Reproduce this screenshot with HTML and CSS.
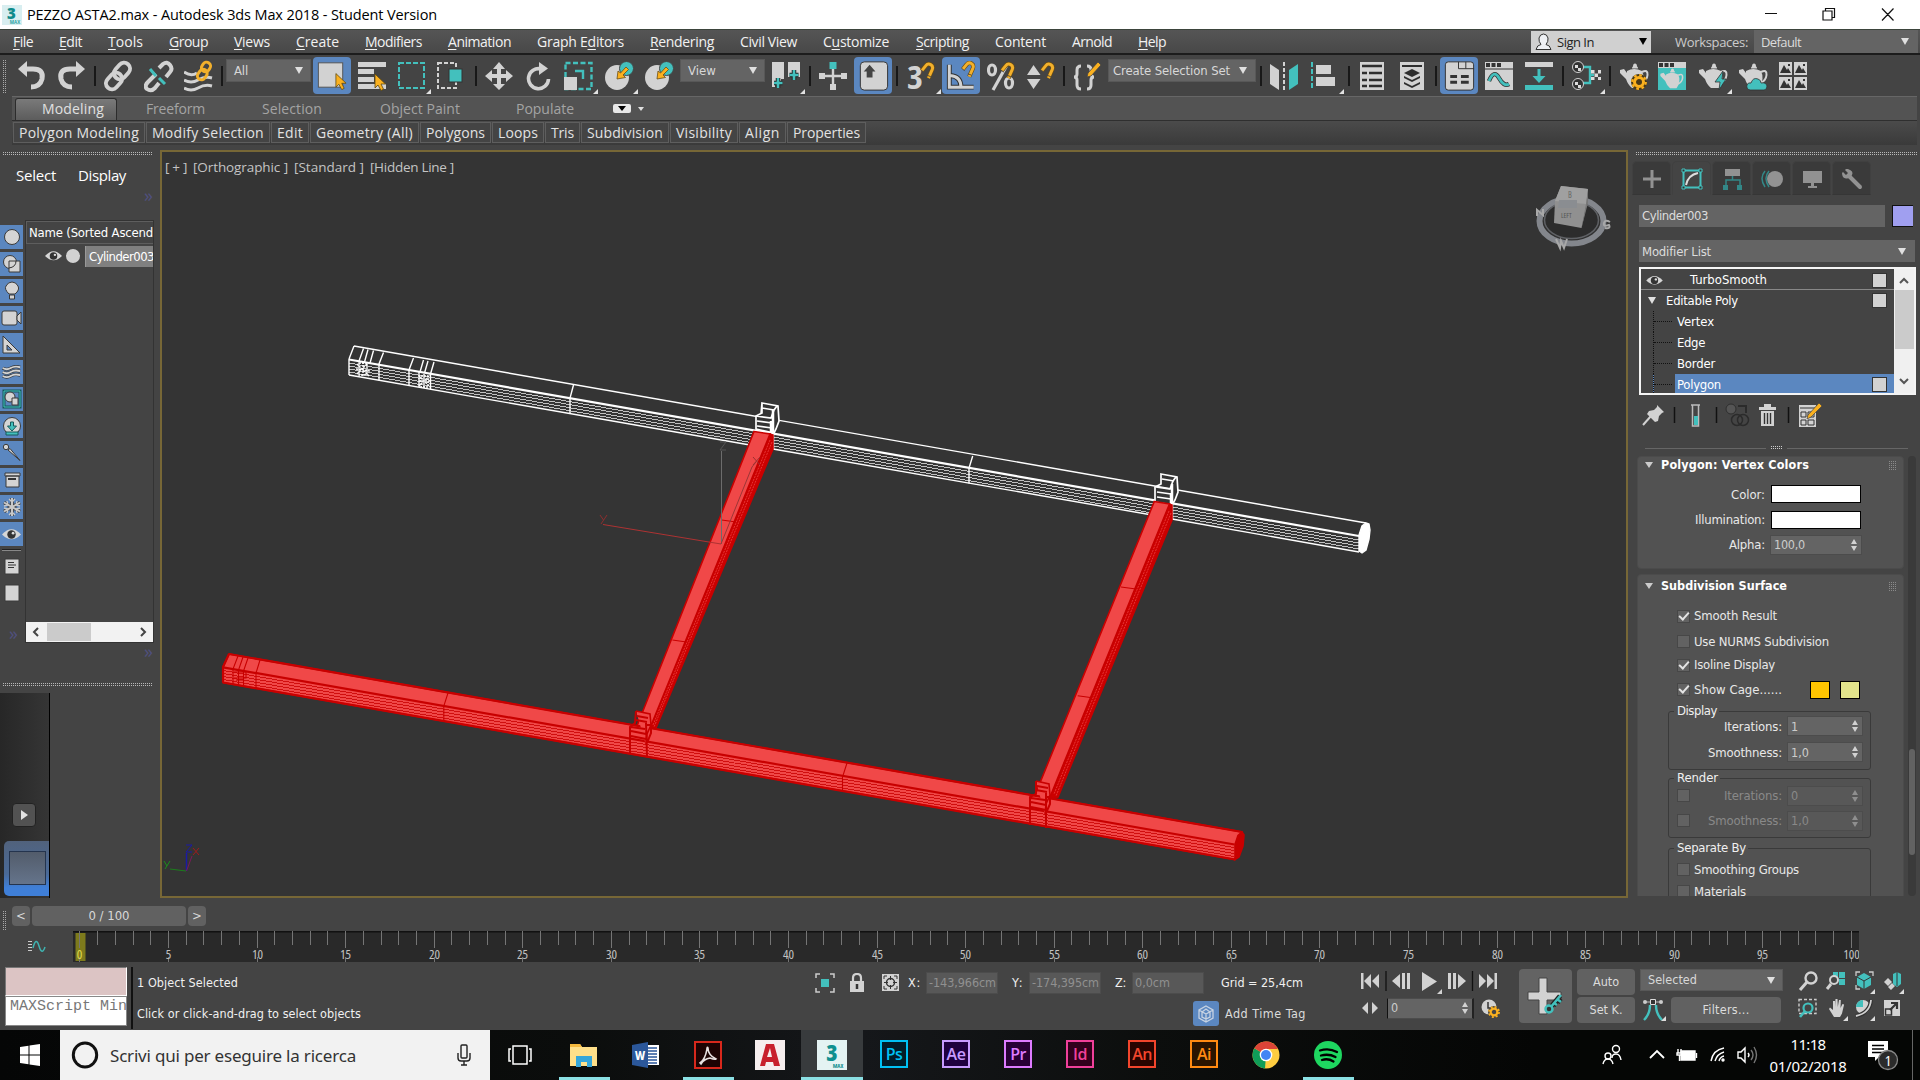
FILE: index.html
```html
<!DOCTYPE html>
<html lang="en">
<head>
<meta charset="utf-8">
<title>PEZZO ASTA2.max - Autodesk 3ds Max 2018 - Student Version</title>
<link rel="stylesheet" href="styles.css">
</head>
<body>
<svg class="defs" width="0" height="0">
  <defs>
    <symbol id="magnet" viewBox="0 0 16 20"><path d="M2 9 6 4C9 0 15 3 13 8L9 17" fill="none" stroke="#6b4c10" stroke-width="4.6"/><path d="M2 9 6 4C9 0 15 3 13 8L9 17" fill="none" stroke="#f2b02c" stroke-width="3.2"/><path d="M1 8l3 3M7.500 14l4 1.500" stroke="#444" stroke-width="1"/></symbol>
    <symbol id="cursor" viewBox="0 0 12 18"><path d="M1 1v14l3-3 3 5.500 2.500-1.300L7 11h4.500z" fill="#fbb11f" stroke="#5d480f" stroke-width=".8"/></symbol>
    <symbol id="teapot" viewBox="0 0 30 26"><path d="M7 8Q14 4 22 8Q26 16 20 25H12Q8 22 6 16L0 10V7L4 6 7 10z" fill="#d2d2d2"/><path d="M12 5.500q0-2 1-2 0-3 2-3t2 3q1 0 1 2z" fill="#d2d2d2"/><path d="M22 9q6-3 5.500 3T21 20" fill="none" stroke="#d2d2d2" stroke-width="2"/></symbol>
    <symbol id="eye" viewBox="0 0 18 12"><path d="M0 6Q9-4 18 6Q9 15 0 6z" fill="#d6d6d6"/><circle cx="9" cy="6" r="4" fill="#333"/><circle cx="10.500" cy="4.800" r="1.300" fill="#ddd"/></symbol>
    <symbol id="corner" viewBox="0 0 5 5"><path d="M5 0v5H0z" fill="#e2e2e2"/></symbol>
    <symbol id="waves" viewBox="0 0 24 18"><path d="M1 4q5 3 10 0t12-1M1 9q5 3 10 0t12-1M1 14q5 3 10 0t12-1" fill="none" stroke="#333" stroke-width="4"/><path d="M1 4q5 3 10 0t12-1M1 9q5 3 10 0t12-1M1 14q5 3 10 0t12-1" fill="none" stroke="#d2d2d2" stroke-width="2.400"/></symbol>
    <symbol id="gear" viewBox="0 0 16 16"><circle cx="8" cy="8" r="4.500" fill="none" stroke="#fbb11f" stroke-width="3"/><circle cx="8" cy="8" r="6.800" fill="none" stroke="#fbb11f" stroke-width="2.200" stroke-dasharray="2.700 2.640"/></symbol>
  </defs>
</svg>

<header class="titlebar">
  <svg class="app-logo" viewBox="0 0 20 20"><rect width="20" height="20" fill="#d8eef0"/><text x="9.500" y="13.500" text-anchor="middle" font-size="15" font-weight="800" fill="#0e8b8b">3</text><text x="13" y="19" text-anchor="middle" font-size="4.500" font-weight="700" fill="#2aa3a3">MAX</text></svg>
  <span class="title" data-w="410">PEZZO ASTA2.max - Autodesk 3ds Max 2018 - Student Version</span>
  <svg class="win-btns" width="160" height="29" viewBox="0 0 160 29" fill="none" stroke="#111" stroke-width="1.200"><path d="M5 13.500h12M63 11h9v9h-9zM65.500 10.500V8.500h9v9h-2M122 8.500l11.500 12M133.500 8.500l-11.500 12"/></svg>
</header>

<nav class="menubar">
  <span data-w="20"><u>F</u>ile</span><span data-w="23"><u>E</u>dit</span><span data-w="35"><u>T</u>ools</span><span data-w="39"><u>G</u>roup</span><span data-w="36"><u>V</u>iews</span><span data-w="43"><u>C</u>reate</span><span data-w="57"><u>M</u>odifiers</span><span data-w="63"><u>A</u>nimation</span><span data-w="87">Graph E<u>d</u>itors</span><span data-w="64"><u>R</u>endering</span><span data-w="57">Civil View</span><span data-w="66">C<u>u</u>stomize</span><span data-w="53"><u>S</u>cripting</span><span data-w="51">Content</span><span data-w="40">Arnold</span><span data-w="28"><u>H</u>elp</span>
  <div class="signin"><svg width="17" height="18" viewBox="0 0 17 18"><path d="M1 16.500q1-4.500 5-5-2.500-3-2-6.500 1-4 4.500-4T13 5q.5 3.500-2 6.500 4 .5 5 5z" fill="#eef0f4" stroke="#333" stroke-width="1"/></svg><span data-w="37">Sign In</span><i class="caret dark"></i></div>
  <span class="ws-label" data-w="73">Workspaces:</span>
  <div class="ws-select"><span data-w="40">Default</span><i class="caret"></i></div>
</nav>

<div class="toolbar">
  <i class="vgrip"></i>
  <svg class="ic" viewBox="0 0 34 38"><path d="M4 12H15Q26 12 24 22Q22 30 13 30" fill="none" stroke="#d2d2d2" stroke-width="5"/><path d="M0 12 9 4v16z" fill="#d2d2d2"/></svg>
  <svg class="ic" viewBox="0 0 34 38"><path d="M24 12H13Q2 12 4 22Q6 30 15 30" fill="none" stroke="#d2d2d2" stroke-width="5"/><path d="M28 12 19 4v16z" fill="#d2d2d2"/></svg>
  <i class="sep"></i>
  <svg class="ic" viewBox="0 0 34 38"><g fill="none" stroke="#d2d2d2" stroke-width="4"><rect x="12" y="5" width="12" height="18" rx="6" transform="rotate(42 18 14)"/><rect x="4" y="15" width="12" height="18" rx="6" transform="rotate(42 10 24)"/></g></svg>
  <svg class="ic" viewBox="0 0 34 38"><g fill="none" stroke="#d2d2d2" stroke-width="4"><path d="M15 11l4-4q4-3 7 1t0 7l-4 5M12 17l-8 8q-4 4-1 7 4 3 8-1l4-5"/></g><path d="M6 12l6 7M15 21l6 6" stroke="#43c0bd" stroke-width="3"/></svg>
  <svg class="ic" viewBox="0 0 34 38"><g fill="none" stroke="#d2d2d2" stroke-width="3"><path d="M0 15q7 5 13 1M0 23q7 4 14 0t14-2M0 31q7 4 14 0t14-2"/></g><g fill="none" stroke="#f2b02c" stroke-width="3"><rect x="18" y="5" width="8" height="10" rx="4" transform="rotate(35 22 10)"/><rect x="14" y="12" width="8" height="11" rx="4" transform="rotate(35 18 18)"/></g></svg>
  <i class="sep"></i>
  <div class="dd"><span data-w="14">All</span><i class="caret"></i></div>
  <svg class="ic on" viewBox="0 0 38 38"><rect x="5" y="6" width="25" height="25" fill="#d2d2d2" stroke="#555"/><use href="#cursor" x="22" y="16" width="12" height="18"/></svg>
  <svg class="ic" viewBox="0 0 34 38"><path d="M0 5h28v5H0zM0 12h16v5H0zM0 20h16v5H0zM0 27h28v5H0z" fill="#d2d2d2"/><use href="#cursor" x="16" y="16" width="12" height="18"/></svg>
  <svg class="ic" viewBox="0 0 34 38"><rect x="1" y="6" width="25" height="25" fill="none" stroke="#43c0bd" stroke-width="2" stroke-dasharray="5 2"/><use href="#corner" x="28" y="32" width="5" height="5"/></svg>
  <svg class="ic" viewBox="0 0 34 38"><rect x="1" y="6" width="18" height="25" fill="none" stroke="#d2d2d2" stroke-width="2" stroke-dasharray="4 2"/><rect x="12" y="12" width="13" height="13" fill="#43c0bd" stroke="#333"/></svg>
  <i class="sep"></i>
  <svg class="ic" viewBox="0 0 34 38"><path d="M14 5l6 7h-4v5h5v-4l7 6-7 6v-4h-5v6h4l-6 6-6-6h4v-6H7v4l-7-6 7-6v4h5v-5H8z" fill="#d2d2d2"/></svg>
  <svg class="ic" viewBox="0 0 34 38"><path d="M15 12A10 10 0 1 0 22.500 22" fill="none" stroke="#d2d2d2" stroke-width="3.600"/><path d="M13 5v13l9-6.500z" fill="#d2d2d2"/></svg>
  <svg class="ic" viewBox="0 0 34 38"><rect x="1.500" y="6" width="26" height="26" fill="none" stroke="#43c0bd" stroke-width="2.400" stroke-dasharray="5 2.500"/><rect x="0" y="20" width="13" height="13" fill="#d2d2d2"/><path d="M11 14h8v8" fill="none" stroke="#43c0bd" stroke-width="2.400"/><use href="#corner" x="29" y="32" width="5" height="5"/></svg>
  <svg class="ic" viewBox="0 0 34 38"><ellipse cx="12" cy="20.500" rx="12" ry="12.500" fill="#d2d2d2"/><circle cx="21.500" cy="11.500" r="7" fill="#43c0bd" stroke="#444"/><path d="M12 22l1-8 2.500 2L21 10l2.500 2.500L18 18l2.500 2.500z" fill="#fbb11f" stroke="#6b4c10" stroke-width=".8"/><use href="#corner" x="28" y="32" width="5" height="5"/></svg>
  <svg class="ic" viewBox="0 0 34 38"><ellipse cx="12" cy="20.500" rx="12" ry="12.500" fill="#d2d2d2"/><circle cx="21.500" cy="11.500" r="7" fill="#43c0bd" stroke="#444"/><path d="M12 22l1-8 2.500 2L21 10l2.500 2.500L18 18l2.500 2.500z" fill="#fbb11f" stroke="#6b4c10" stroke-width=".8"/></svg>
  <div class="dd"><span data-w="28">View</span><i class="caret"></i></div>
  <svg class="ic" viewBox="0 0 34 38"><path d="M0 5h12v17H9v4H3v4H0zM16 5h12v15h-4v-6h-4v6h-4z" fill="#d2d2d2"/><path d="M6 21v10M2 26h8.500M22 13v10M17.500 18h9" stroke="#222" stroke-width="4.500"/><path d="M6 21v10M2 26h8.500M22 13v10M17.500 18h9" stroke="#43c0bd" stroke-width="2.600"/><use href="#corner" x="28" y="32" width="5" height="5"/></svg>
  <i class="sep"></i>
  <svg class="ic" viewBox="0 0 34 38"><path d="M14 9v22M2 19h24" stroke="#d2d2d2" stroke-width="2.400"/><path d="M0 16h6v6H0zM22 16h6v6h-6zM11 27h6v6h-6z" fill="#d2d2d2"/><rect x="10.500" y="5" width="7" height="7" fill="#43c0bd"/></svg>
  <svg class="ic on" viewBox="0 0 38 38"><rect x="6" y="5" width="28" height="29" rx="4" fill="#d2d2d2" stroke="#333"/><path d="M15.500 8l6 7h-3v6h-6v-6h-3z" fill="#444"/></svg>
  <i class="sep"></i>
  <svg class="ic" viewBox="0 0 34 38"><text class="glyph" x="0" y="32" font-size="32" font-weight="700" fill="#d2d2d2" textLength="16" lengthAdjust="spacingAndGlyphs">3</text><use href="#magnet" x="13" y="5" width="15" height="19"/><use href="#corner" x="29" y="32" width="5" height="5"/></svg>
  <svg class="ic on" viewBox="0 0 38 38"><path d="M7 8v23h25M8 19q11 1 11 12" fill="none" stroke="#333" stroke-width="5"/><path d="M7 8v23h25M8 19q11 1 11 12" fill="none" stroke="#d2d2d2" stroke-width="3"/><use href="#magnet" x="19" y="4" width="15" height="19"/></svg>
  <svg class="ic" viewBox="0 0 34 38"><g fill="none" stroke="#d2d2d2" stroke-width="3.200"><ellipse cx="5" cy="13" rx="3.500" ry="5"/><ellipse cx="22" cy="26" rx="3.500" ry="5"/><path d="M20 8L6 33"/></g><use href="#magnet" x="13" y="5" width="15" height="19"/></svg>
  <svg class="ic" viewBox="0 0 34 38"><path d="M6.500 8l7 10H0zM0 22h13.500l-7 10z" fill="#d2d2d2"/><use href="#magnet" x="13" y="5" width="15" height="19"/></svg>
  <i class="sep"></i>
  <svg class="ic" viewBox="0 0 34 38"><path d="M8 9q-4 0-4 4v4q0 3-3 3 3 0 3 3v5q0 4 4 4M14 9q4 0 4 4v4q0 3 3 3-3 0-3 3v5q0 4-4 4" fill="none" stroke="#d2d2d2" stroke-width="3"/><path d="M25 5l3 3-10 11-4 1 1-4z" fill="#fbb11f" stroke="#444" stroke-width=".8"/></svg>
  <div class="dd wide"><span data-w="117">Create Selection Set</span><i class="caret"></i></div>
  <i class="sep"></i>
  <svg class="ic" viewBox="0 0 34 38"><path d="M0 7l9 6v20l-9-6z" fill="#d2d2d2"/><path d="M14 5v28" stroke="#d2d2d2" stroke-width="2" stroke-dasharray="4 2"/><path d="M19 13l9-6v20l-9 6z" fill="#43c0bd"/></svg>
  <svg class="ic" viewBox="0 0 34 38"><path d="M1 5v28" stroke="#43c0bd" stroke-width="2" stroke-dasharray="5 2"/><path d="M5 8h15v9H5zM5 20h19v9H5z" fill="#d2d2d2"/><use href="#corner" x="28" y="32" width="5" height="5"/></svg>
  <i class="sep"></i>
  <svg class="ic" viewBox="0 0 34 38"><path d="M0 5h24v28H0z" fill="#d2d2d2"/><path d="M2 9h20M2 16h5M9 16h13M2 23h5M9 23h13M2 29h5M9 29h13" stroke="#2e2e2e" stroke-width="2.400"/></svg>
  <svg class="ic" viewBox="0 0 34 38"><path d="M0 5h24v28H0z" fill="#d2d2d2"/><path d="M2 9h20" stroke="#2e2e2e" stroke-width="2"/><path d="M12 12l8 4-8 4-8-4zM4 19l8 4 8-4v2l-8 4-8-4zM4 25l8 4 8-4v2l-8 4-8-4z" fill="#2e2e2e"/></svg>
  <i class="sep"></i>
  <svg class="ic on" viewBox="0 0 38 38"><rect x="5" y="5" width="29" height="29" rx="3" fill="#d2d2d2" stroke="#333"/><path d="M18.500 5v7h16M26 5v7" fill="none" stroke="#333"/><path d="M10 20h7M21 20h8M10 26h7M21 26h8" stroke="#333" stroke-width="3"/></svg>
  <svg class="ic" viewBox="0 0 34 38"><path d="M0 5h28v28H0z" fill="#d2d2d2"/><path d="M1 8h15" stroke="#333" stroke-width="4" stroke-dasharray="4 1.500"/><path d="M0 12h28" stroke="#333"/><path d="M4 24q5-12 10-3t10 6" fill="none" stroke="#333" stroke-width="4.400"/><path d="M4 24q5-12 10-3t10 6" fill="none" stroke="#43c0bd" stroke-width="2.800"/></svg>
  <svg class="ic" viewBox="0 0 34 38"><path d="M0 5h28v5H0z" fill="#d2d2d2"/><path d="M0 28h28v5H0zM12.500 12h3v7h5l-6.500 7-6.500-7h5z" fill="#43c0bd"/></svg>
  <i class="sep"></i>
  <svg class="ic" viewBox="0 0 34 38"><path d="M11 10h7v16h-7M18 18h4" fill="none" stroke="#43c0bd" stroke-width="2.400"/><circle cx="6" cy="10" r="5.500" fill="#333" stroke="#d2d2d2"/><circle cx="6" cy="27" r="5.500" fill="#333" stroke="#d2d2d2"/><path d="M3 8h3v3h3v3H6v-3H3zM3 25h3v3h3v3H6v-3H3zM19 13h3.500v3.500H26V13h3v3.500h-3V20h3v3h-3v-3h-3.500v3H19v-3h3.500v-3.500H19z" fill="#ddd"/><use href="#corner" x="28" y="32" width="5" height="5"/></svg>
  <i class="sep"></i>
  <svg class="ic" viewBox="0 0 34 38"><use href="#teapot" y="6" width="30" height="26"/><circle cx="19" cy="25" r="8" fill="#4a3a18"/><use href="#gear" x="11" y="17" width="16" height="16"/></svg>
  <svg class="ic" viewBox="0 0 34 38"><path d="M0 5h28v28H0z" fill="#43c0bd"/><path d="M0 5h28v6H0z" fill="#d2d2d2"/><path d="M1 8h15" stroke="#333" stroke-width="4" stroke-dasharray="4 1.500"/><use href="#teapot" x="2" y="11" width="25" height="21"/></svg>
  <svg class="ic" viewBox="0 0 34 38"><use href="#teapot" y="6" width="30" height="26"/><path d="M24 14l-8 11h5l-1 8 7-11h-4z" fill="#43c0bd" stroke="#333" stroke-width=".8"/><use href="#corner" x="28" y="32" width="5" height="5"/></svg>
  <svg class="ic" viewBox="0 0 34 38"><use href="#teapot" y="6" width="30" height="26"/><path d="M11 33q-4-1-3-5 1-3 4-2 2-6 7-4 3 1 3 4 5-1 6 3 0 4-3 4z" fill="#43c0bd" stroke="#333" stroke-width=".8"/></svg>
  <svg class="ic" viewBox="0 0 34 38"><path d="M0 5h13v13H0zM15 5h13v13H15zM0 20h13v13H0zM15 20h13v13H15z" fill="#d2d2d2"/><path d="M1 16l4-8 3 5 1-2 3 5zM16 16l4-8 3 5 1-2 3 5zM1 31l4-8 3 5 1-2 3 5zM16 31l4-8 3 5 1-2 3 5z" fill="#333"/><path d="M9 8h2M24 8h2M9 23h2M24 23h2" stroke="#333" stroke-width="2"/></svg>
</div>

<div class="ribbon">
  <div class="tabs"><span class="tab active"><b data-w="62">Modeling</b></span><span class="tab" data-w="59">Freeform</span><span class="tab" data-w="60">Selection</span><span class="tab" data-w="80">Object Paint</span><span class="tab" data-w="58">Populate</span><i class="pill"><i class="caret dark"></i></i><i class="caret tiny"></i></div>
  <div class="panels"><span><b data-w="120">Polygon Modeling</b></span><span><b data-w="112">Modify Selection</b></span><span><b data-w="26">Edit</b></span><span><b data-w="97">Geometry (All)</b></span><span><b data-w="59">Polygons</b></span><span><b data-w="40">Loops</b></span><span><b data-w="23">Tris</b></span><span><b data-w="76">Subdivision</b></span><span><b data-w="56">Visibility</b></span><span><b data-w="35">Align</b></span><span><b data-w="67">Properties</b></span></div>
</div>

<main class="main">
  <aside class="left">
    <i class="hgrip"></i>
    <div class="ex-tabs"><span data-w="40">Select</span><span data-w="48">Display</span></div>
    <div class="more">»</div>
    <div class="explorer">
      <div class="filters">
        <svg viewBox="0 0 23 24"><circle cx="12" cy="12" r="7.500" class="w"/></svg>
        <svg viewBox="0 0 23 24"><circle cx="10" cy="10" r="6.500" class="w"/><path d="M9 9h11v11H9z" class="w"/><path d="M16 9q0 6-7 7" fill="none" stroke="#333"/></svg>
        <svg viewBox="0 0 23 24"><path d="M9 15Q4 10 6 7q2-4 6-4t6 4-3 8zM9.500 16h5v4h-5z" class="w"/></svg>
        <svg viewBox="0 0 23 24"><rect x="2" y="5" width="15" height="14" rx="2" class="w"/><path d="M21 6v12l-4-4v-4z" class="w"/></svg>
        <svg viewBox="0 0 23 24"><path d="M3 3v17h17zM7 12v5h5z" class="w" fill-rule="evenodd"/></svg>
        <svg viewBox="0 0 23 24"><use href="#waves" x="2" y="3" width="19" height="18"/></svg>
        <svg viewBox="0 0 23 24"><path d="M4 4h16v16H4z" fill="none" stroke="#17595a" stroke-width="3"/><path d="M4 4h16v16H4z" fill="none" stroke="#43c0bd"/><circle cx="10" cy="10" r="5" class="w"/><path d="M12 11h6v7h-6z" class="w"/></svg>
        <svg viewBox="0 0 23 24"><circle cx="12" cy="12" r="8.500" class="w"/><path d="M10.500 8h3v4h3L12 17l-4.500-5h3zM6 18h12v3H6z" fill="#43c0bd" stroke="#17595a"/></svg>
        <svg viewBox="0 0 23 24"><circle cx="6" cy="6" r="2.700" class="w"/><path d="M8 9l2-1.500 10 12z" class="w"/></svg>
        <svg viewBox="0 0 23 24"><path d="M6 8h13v11H6zM5 5h15v3H5z" class="w"/><path d="M8 11h8" stroke="#333" stroke-width="2"/></svg>
        <svg viewBox="0 0 23 24"><g stroke="#444" stroke-width="3.600"><path d="M12 3v18M4 7.500l16 9M20 7.500l-16 9"/></g><g stroke="#c8c8c8" stroke-width="2"><path d="M12 3v18M4 7.500l16 9M20 7.500l-16 9"/></g><path d="M9 4l3 3 3-3M9 20l3-3 3 3M4 11l4-1-1-4M20 11l-4-1 1-4M4 13l4 1-1 4M20 13l-4 1 1 4" fill="none" stroke="#c8c8c8" stroke-width="1.300"/></svg>
        <svg viewBox="0 0 23 24"><use href="#eye" x="2" y="6" width="19" height="13"/></svg>
        <i class="rule"></i>
        <svg class="plain" viewBox="0 0 23 24"><path d="M5 6h14v15H5z" class="w"/><path d="M8 9.500h6M8 12h8M8 14.500h6" stroke="#333"/></svg>
        <svg class="plain" viewBox="0 0 23 24"><path d="M5 5h14v16H5z" class="w"/></svg>
        <div class="more side">»</div>
      </div>
      <div class="list">
        <div class="list-head"><span data-w="124">Name (Sorted Ascend</span></div>
        <div class="list-row"><svg width="17" height="12"><use href="#eye" width="17" height="12"/></svg><i class="dot"></i><span class="nm"><b data-w="65">Cylinder003</b></span></div>
        <div class="hscroll"><svg width="8" height="10" viewBox="0 0 8 10"><path d="M6 1L2 5l4 4" fill="none" stroke="#444" stroke-width="2"/></svg><i></i><svg width="8" height="10" viewBox="0 0 8 10"><path d="M2 1l4 4-4 4" fill="none" stroke="#444" stroke-width="2"/></svg></div>
      </div>
    </div>
    <div class="more">»</div>
    <i class="hgrip low"></i>
    <div class="vp-tabs"><i class="play"></i><div class="layout-btn"><i></i></div></div>
  </aside>

  <section class="viewport">
    <svg width="1464" height="744" viewBox="162 152 1464 744" id="scene">
      <g class="wire">
        <path d="M354 346 1366 523M354 346 349 359"/>
        <path d="M349 359.500 1359 536" stroke-width="2.200"/>
        <path d="M349 375 750 445M773 449 1155 515.500M1172 519 1359 552"/>
        <path class="rib" d="M349 363 752 433.500M349 366 752 436.500M349 369 751 439.500M349 372 751 442.500M773 437 1155 504M773 440 1154 507M773 443 1153 510M773 446 1152 513M1172 507 1359 540M1172 510 1359 543M1172 513 1359 546M1172 516 1359 549"/>
        <path d="M349 359v16M363.500 348.500 359 361M368 349.500 364.500 362M373.500 350.500 370 363M383.500 352.500 379 364v16.500M413.500 358 409 370v15.500M423.500 360 420 372M428 361 424.500 373M434 362 430.500 374M419 372v15M430.500 373v16M573.500 385 570 398v15.500M972.700 456 969 468v15.500"/>
        <path d="M357 364l12 12M357 374l11-11M363 362v15M356 369l14 2M359 363h8v12h-8zM419 376l11 11M419 386l11-11M424 374v15M419 381h12M421 376h7v11h-7z" stroke-dasharray="2 1"/>
        <path d="M1366 523l3 1 1 6-1 9-3 11-4 3-3-2v-16l3-9z" fill="#fff"/>
        <g transform="translate(1 1)">
          <path d="M761 402l16 3 1 15-3 8-2 4-18-4v-13l6-3zM761 402l-1 11M755 415l15 2 3-8 3-4M761 407l12 2M756 420l15 2M756 425l15 2" class="clip"/>
          <path d="M772 409v39M770 420v13" stroke-width="2.500"/>
          <path d="M1160 473l16 3 1 15-3 8-3 5-17-3v-15l6-3zM1160 473v10M1155 486l14 2 3-8 3-4M1161 478l12 2M1156 491l14 2M1156 496l14 2" class="clip"/>
          <path d="M1171 483v36M1170 492v12" stroke-width="2.500"/>
        </g>
      </g>
      <g class="redmesh">
        <path class="side" d="M770 434 773 435V449L656 728 648 735 650 722z"/>
        <path class="face" d="M754 431.500 770 434 650 728 635 731z"/>
        <path class="thin" d="M721.700 520l14.500 2M672.400 640l14 2"/>
        <path class="grain" d="M772 442 654 727M770 440 653 725"/>
        <path class="side" d="M1169 504 1172 505V520L1058 797 1048 800z"/>
        <path class="face" d="M1154.300 501.500 1169.500 504 1050 797 1033 800z"/>
        <path class="thin" d="M1121 587l15 2M1077.700 695.700l14.500 2"/>
        <path class="grain" d="M1171 513 1056 796M1169 511 1054 794"/>
        <path class="face" d="M229 654 1242 832 1235 859.500 223 682.500V667z"/>
        <path d="M229 654 1242 832M223 682.500 1235 859.500M229 654 223 667V682.500" stroke-width="2.200"/>
        <path d="M223 667.300 1234.500 844.500" stroke-width="2.200"/>
        <path class="rib" d="M223 670.500 1234 847.500M223 673.500 1234 850.500M223 676.500 1234 853.500M223 679.500 1234 856.500"/>
        <path class="thin" d="M238 656 233 669v15M243 657 238.500 670v15M248 658 243.500 671v15M260 660 256 673v16M448 693 443.800 706v15.500M847 763 842.500 777v14M234 672h12v6h-12M236 680h8"/>
        <path d="M1242 832l2 3-1 11-4 11-4 2.500v-15l3-9z" fill="#c80000"/>
        <path d="M636 711l14 3 1 11-4 9-1 11" class="clipr"/><path d="M636 711 635 723 630 727V754M646 723 647 756M647 725h4v8l-4 10M637 716l11 2M636 720l11 2M631 727l14 2M631 731l15 3M631 736l15 3" stroke-width="2"/>
        <path d="M1036 781l13 3 1 11-4 9-1 11" class="clipr"/><path d="M1036 781v13l-6 3v28M1046 793v35M1046 797h4v7l-4 9M1037 786l11 2M1036 790l11 2M1031 798l14 2M1031 802l15 3M1031 807l15 3" stroke-width="2"/>
      </g>
      <g class="giz" fill="none">
        <path d="M721.500 451v93" stroke="#6c6c6c"/><path d="M603 524.500 721 544" stroke="#ad3232"/><path d="M721 544 752 467 756 462" stroke="#9c3636"/>
        <path d="M600 515l3.500 5M607 515l-6 9" stroke="#8c2e2e"/><path d="M720 442h6l-6 8h6" stroke="#555"/><path d="M753 457l7 8M760 457l-7 8" stroke="#9c3030"/>
        <path d="M186.500 853v18" stroke="#1a1aa6" stroke-width="1.500"/><path d="M186.500 871 192 856" stroke="#7b1a5a"/><path d="M170 869l16 2" stroke="#1c7d1c"/>
        <path d="M186 845h6l-6 7h6" stroke="#1a1aa6"/><path d="M193 848l6 7M199 848l-6 7" stroke="#a01c1c"/><path d="M164 861l3 5M170 861l-5 8" stroke="#1c8d1c"/>
      </g>
      <g class="cube">
        <ellipse cx="1571.500" cy="221" rx="32" ry="22.500" fill="#303030" stroke="#83868c" stroke-width="6"/>
        <ellipse cx="1571.500" cy="220" rx="27" ry="18.500" fill="#2c2c2c" stroke="#5f6165" stroke-width="1.500"/>
        <path d="M1561 186 1588 189 1587 203 1581.500 228 1554 223 1555 201z" fill="#909090"/><path d="M1561 186 1588 189 1586 204 1555 201z" fill="#a0a0a0"/><path d="M1586 204 1588 189V203L1581.500 228z" fill="#777"/>
        <path d="M1559 200h18v8h-19z" fill="#8a8d91"/>
        <text x="1561" y="218" font-size="7" fill="#555">LEFT</text><text x="1568" y="198" font-size="8" fill="#666">B</text>
        <path d="M1537 216v-6l6 5v-6M1556 239l4 9 1-7 3 7 3-9M1610 222q-5-3-6 1t5 2q2 4-4 3" fill="none" stroke="#a8a8a8" stroke-width="2"/>
      </g>
    </svg>
    <div class="vp-label"><span data-w="22">[ + ]</span><span data-w="95">[Orthographic ]</span><span data-w="70">[Standard ]</span><span data-w="84">[Hidden Line ]</span></div>
  </section>

  <aside class="right">
    <i class="hgrip"></i>
    <div class="cp-tabs">
      <span><svg viewBox="0 0 24 24"><path d="M12 3v18M3 12h18" stroke="#929292" stroke-width="3"/></svg></span>
      <span class="on"><svg viewBox="0 0 24 24"><path d="M3.500 3.500h17v17h-17z" fill="none" stroke="#43c0bd" stroke-width="2"/><path d="M6 18q2-10 12-12" fill="none" stroke="#ddd" stroke-width="2"/><path d="M2 2h3v3H2zM19 2h3v3h-3zM2 19h3v3H2zM19 19h3v3h-3z" fill="#333" stroke="#43c0bd"/></svg></span>
      <span><svg viewBox="0 0 24 24"><path d="M5 2h15v7H5z" fill="#929292"/><path d="M12.500 9v4M6 18v-5h14v5" fill="none" stroke="#388" stroke-width="1.500"/><path d="M3 18h5v5H3zM17 18h5v5h-5z" fill="#388"/></svg></span>
      <span><svg viewBox="0 0 24 24"><circle cx="15" cy="12" r="8" fill="#929292"/><path d="M9 4q-6 7 0 16M5 4q-6 7 0 16" fill="none" stroke="#388" stroke-width="1.500"/></svg></span>
      <span><svg viewBox="0 0 24 24"><path d="M3 4h19v12H3zM11 16h3v3h3v2H8v-2h3z" fill="#929292"/></svg></span>
      <span><svg viewBox="0 0 24 24"><path d="M9 9l11 11" stroke="#929292" stroke-width="4" stroke-linecap="round"/><path d="M6 2l-1 1 3 3-2 2-3-3-1 1q0 5 4 5.500T12 8 8 2z" fill="#929292"/></svg></span>
    </div>
    <div class="cp-name"><div class="field"><span data-w="66">Cylinder003</span></div><i class="swatch"></i></div>
    <div class="cp-mod"><span data-w="69">Modifier List</span><i class="caret"></i></div>
    <div class="stack">
      <div class="rows">
        <div class="r top"><svg width="17" height="11"><use href="#eye" width="17" height="11"/></svg><span data-w="77">TurboSmooth</span><i class="box"></i></div>
        <div class="r head"><i class="caret"></i><span data-w="72">Editable Poly</span><i class="box"></i></div>
        <div class="r sub"><span data-w="37">Vertex</span></div>
        <div class="r sub"><span data-w="28">Edge</span></div>
        <div class="r sub"><span data-w="38">Border</span></div>
        <div class="r sub sel"><span data-w="44">Polygon</span><i class="box"></i></div>
      </div>
      <div class="vscroll"><svg width="12" height="8" viewBox="0 0 12 8"><path d="M2 6l4-4 4 4" fill="none" stroke="#555" stroke-width="2"/></svg><i></i><svg width="12" height="8" viewBox="0 0 12 8"><path d="M2 2l4 4 4-4" fill="none" stroke="#555" stroke-width="2"/></svg></div>
    </div>
    <svg class="stack-tools" width="280" height="40" viewBox="1635 395 280 40">
      <path d="M1643 425l8-9" stroke="#d2d2d2" stroke-width="2"/><path d="M1657 405l7 7-2 1-3 3-1 5-3 1-8-8 2-3 5-1 3-3z" fill="#d2d2d2"/>
      <path d="M1674.500 407v16M1716.500 407v16M1788.500 407v16" stroke="#111" stroke-width="1.500"/>
      <path d="M1691 405h9M1692.500 405v21h6v-21" fill="none" stroke="#bbb" stroke-width="1.500"/><path d="M1694 416h4v9h-4z" fill="#43c0bd"/>
      <circle cx="1731" cy="409" r="5" fill="#555" stroke="#2e2e2e"/><circle cx="1737" cy="420" r="5.500" fill="#444" stroke="#2b2b2b" stroke-width="1.500"/><circle cx="1743" cy="420" r="5.500" fill="none" stroke="#2b2b2b" stroke-width="1.500"/><path d="M1738 406h8v7" fill="none" stroke="#2b2b2b" stroke-width="2"/>
      <path d="M1759 407h17v3h-17zM1764 404h7v3h-7z" fill="#d2d2d2"/><path d="M1761 411h13v15h-13z" fill="#d2d2d2"/><path d="M1764.500 413v11M1767.500 413v11M1770.500 413v11" stroke="#333" stroke-width="1.400"/>
      <path d="M1799 405h17v22h-17z" fill="#d2d2d2"/><path d="M1800 408h15M1801 412h5v5h-5zM1808 412h6v5h-6zM1801 420h5v5h-5zM1808 420h6v5h-6z" fill="none" stroke="#333"/><path d="M1819 403l3 3-11 11-4 2 1-4z" fill="#fbb11f" stroke="#444" stroke-width=".7"/>
    </svg>
    <div class="splitter"><i></i><b></b><i></i></div>
    <div class="rollouts">
      <div class="roll-col">
        <div class="roll r1">
          <div class="rh"><i class="caret"></i><b data-w="148">Polygon: Vertex Colors</b><i class="dots"></i></div>
          <div class="kv"><span data-w="34">Color:</span><i class="white"></i></div>
          <div class="kv"><span data-w="70">Illumination:</span><i class="white"></i></div>
          <div class="kv"><span data-w="36">Alpha:</span><div class="spin wide"><span data-w="31">100,0</span><i class="ud"></i></div></div>
        </div>
        <div class="roll r2">
          <div class="rh"><i class="caret"></i><b data-w="126">Subdivision Surface</b><i class="dots"></i></div>
          <div class="ck"><i class="cb on"></i><span data-w="83">Smooth Result</span></div>
          <div class="ck"><i class="cb"></i><span data-w="135">Use NURMS Subdivision</span></div>
          <div class="ck"><i class="cb on"></i><span data-w="81">Isoline Display</span></div>
          <div class="ck"><i class="cb on"></i><span data-w="88">Show Cage......</span><i class="sw a"></i><i class="sw b"></i></div>
          <fieldset class="g1"><legend><span data-w="40">Display</span></legend>
            <div class="it"><span data-w="58">Iterations:</span><div class="spin"><span data-w="6">1</span><i class="ud"></i></div></div>
            <div class="it"><span data-w="74">Smoothness:</span><div class="spin"><span data-w="18">1,0</span><i class="ud"></i></div></div>
          </fieldset>
          <fieldset class="g2"><legend><span data-w="41">Render</span></legend>
            <div class="it off"><i class="cb"></i><span data-w="58">Iterations:</span><div class="spin"><span data-w="6">0</span><i class="ud"></i></div></div>
            <div class="it off"><i class="cb"></i><span data-w="74">Smoothness:</span><div class="spin"><span data-w="18">1,0</span><i class="ud"></i></div></div>
          </fieldset>
          <fieldset class="g3"><legend><span data-w="69">Separate By</span></legend>
            <div class="ck"><i class="cb"></i><span data-w="105">Smoothing Groups</span></div>
            <div class="ck"><i class="cb"></i><span data-w="52">Materials</span></div>
          </fieldset>
        </div>
      </div>
      <div class="track"><i></i></div>
    </div>
  </aside>
</main>

<div class="slider"><i class="vgrip tall"></i><span class="step">&lt;</span><span class="knob"><b data-w="41">0 / 100</b></span><span class="step">&gt;</span></div>
<div class="timeline">
  <svg width="20" height="16" viewBox="0 0 20 16"><path d="M1 2.500h4M1 5.500h4M1 8.500h4M1 11.500h4" stroke="#ccc"/><path d="M6 9q3-12 6-2t6 1" fill="none" stroke="#3fb3b0" stroke-width="1.500"/></svg>
  <svg id="ruler" width="1786" height="31" viewBox="73 931 1786 31"></svg>
</div>

<footer class="status">
  <div class="listener"><div class="pink"></div><div class="mini">MAXScript Min</div></div>
  <div class="prompt"><span data-w="101">1 Object Selected</span><span data-w="224">Click or click-and-drag to select objects</span></div>
  <div class="coords">
    <div class="crow">
      <svg width="20" height="20" viewBox="0 0 20 20"><path d="M1 5V1h4M15 1h4v4M1 15v4h4M15 19h4v-4" fill="none" stroke="#ccc" stroke-width="1.500"/><path d="M6 6h8v8H6z" fill="#43c0bd"/></svg>
      <svg width="14" height="20" viewBox="0 0 14 20"><path d="M3 9V5q0-4 4-4t4 4v4" fill="none" stroke="#d2d2d2" stroke-width="2.200"/><path d="M0 8h14v11H0z" fill="#d2d2d2"/><path d="M7 11v5" stroke="#333" stroke-width="2.500"/></svg>
      <svg width="17" height="17" viewBox="0 0 17 17"><path d="M0 0h17v17H0z" fill="#d2d2d2"/><circle cx="8.500" cy="8.500" r="4" fill="none" stroke="#333" stroke-width="1.500"/><path d="M8.500 2v4M8.500 11v4M2 8.500h4M11 8.500h4M2 5V2h3M12 2h3v3M2 12v3h3M12 15h3v-3" stroke="#333" fill="none"/></svg>
      <span data-w="13">X:</span><b><em data-w="67">-143,966cm</em></b><span data-w="12">Y:</span><b><em data-w="67">-174,395cm</em></b><span data-w="11">Z:</span><b><em data-w="35">0,0cm</em></b><span class="grid-label" data-w="82">Grid = 25,4cm</span>
    </div>
    <div class="tag"><svg width="26" height="25" viewBox="0 0 26 25"><rect width="26" height="25" rx="3" fill="#5b87c0"/><path d="M13 5l7 4v8l-7 4-7-4V9zM6 9l7 4 7-4M13 13v8M9 11l4-3 4 3v5l-4 2-4-2z" fill="none" stroke="#c6d2e2" stroke-width="1.300"/></svg><span data-w="81">Add Time Tag</span></div>
  </div>
  <div class="playback">
    <svg width="145" height="27" viewBox="1357 967 145 27"><g fill="#d2d2d2"><path d="M1361 973h2.500v16h-2.500zM1371 974v14l-7-7zM1379 974v14l-7-7zM1400 974v14l-8-7zM1402 973h3v16h-3zM1407 973h3v16h-3zM1422 972v19l15-9.500zM1448 973h3v16h-3zM1453 973h3v16h-3zM1458 974v14l8-7zM1479 974v14l7-7zM1487 974v14l7-7zM1494.500 973h2.500v16h-2.500z"/><path d="M1442 989v5h-5z"/></g><path d="M1386 971v20M1472.500 971v20" stroke="#111" stroke-width="1.300"/></svg>
    <div class="prow"><svg width="18" height="14" viewBox="0 0 18 14"><path d="M7 1v12L1 7zM11 1v12l6-6z" fill="#d2d2d2"/></svg><div class="spin frame"><span>0</span><i class="ud"></i></div><svg width="19" height="19" viewBox="0 0 19 19"><circle cx="8" cy="8" r="7.500" fill="#d2d2d2"/><path d="M7 3v6h5" fill="none" stroke="#333" stroke-width="1.500"/><circle cx="13" cy="13" r="6" fill="#444"/><use href="#gear" x="7" y="7" width="12" height="12"/></svg></div>
  </div>
  <div class="bigkey"><svg width="40" height="42" viewBox="0 0 40 42"><path d="M13 3h8v14h14v8H21v14h-8V25H2v-8h11z" fill="#d2d2d2" stroke="#444"/><path d="M34 21L24 33M31 24l4 3M28 28l3 2" stroke="#222" stroke-width="5"/><path d="M35 20L24 33M31 24l4 3M28 28l3 2" stroke="#43c0bd" stroke-width="2.600"/><circle cx="23" cy="34" r="3.500" fill="#333" stroke="#43c0bd" stroke-width="2.500"/></svg></div>
  <div class="autokey"><span><b data-w="26">Auto</b></span><span><b data-w="33">Set K.</b></span></div>
  <div class="keysel">
    <div class="dd sel2"><span data-w="49">Selected</span><i class="caret"></i></div>
    <div class="krow"><svg width="26" height="24" viewBox="0 0 26 24"><path d="M2 22q6-6 6-15M20 22q-6-6-6-15" stroke="#43c0bd" stroke-width="2.400" fill="none"/><path d="M2 4h18" stroke="#bbb" stroke-width="1"/><circle cx="3" cy="4" r="2" fill="#ccc"/><circle cx="19" cy="4" r="2" fill="#ccc"/><path d="M8.500 1.500h5v5h-5z" fill="#333" stroke="#ddd"/><path d="M24 18v5h-5z" fill="#ddd"/></svg><span class="btn"><b data-w="47">Filters...</b></span></div>
  </div>
  <svg class="nav" width="112" height="54" viewBox="1797 969 112 54">
    <circle cx="1811" cy="978" r="5.500" fill="none" stroke="#d2d2d2" stroke-width="2.400"/><path d="M1807 982l-7 8" stroke="#d2d2d2" stroke-width="3"/>
    <path d="M1833 972h5v6h-5zM1839 972h6v6h-6zM1839 979h6v6h-6z" fill="#43c0bd"/><circle cx="1834" cy="980" r="4" fill="#444" stroke="#d2d2d2" stroke-width="2"/><path d="M1831 984l-4 5" stroke="#d2d2d2" stroke-width="3"/>
    <path d="M1856 976v-4h4M1869 972h4v4M1856 985v4h4" fill="none" stroke="#ccc" stroke-width="1.300"/><path d="M1864 973l7 4v8l-7 4-7-4v-8z" fill="#43c0bd"/><path d="M1857 977l7 4 7-4M1864 981v8" fill="none" stroke="#333"/><path d="M1875 989v5h-5zM1904 989v5h-5z" fill="#ddd"/>
    <path d="M1893 974l4-2 4 2v10l-4 3-4-3z" fill="#43c0bd"/><path d="M1897 972v14" stroke="#333"/><path d="M1888 978l4 4-4 4-4-4zM1892 983l3 3-4 4-3-3z" fill="#d2d2d2"/>
    <rect x="1799" y="999.500" width="17" height="14" fill="none" stroke="#ccc" stroke-width="1.400" stroke-dasharray="3 2"/><circle cx="1808" cy="1008" r="4.500" fill="#444" stroke="#43c0bd" stroke-width="2.200"/><path d="M1805 1011l-5 6" stroke="#43c0bd" stroke-width="2.600"/>
    <path d="M1834 1017l-5-8 1-1.500 3 2.500v-9h2v6l.5-8h2l.3 8 1.200-7h1.800l-.3 8 2-4 1.600.5-2.100 9-2 3.500z" fill="#d2d2d2"/><path d="M1848 1016v5h-5zM1875 1016v5h-5z" fill="#ddd"/>
    <circle cx="1863" cy="1007" r="7" fill="#d2d2d2"/><path d="M1863 1000a7 7 0 0 0-7 7h7z" fill="#43c0bd"/><path d="M1856 1016q14-3 15-16" fill="none" stroke="#333" stroke-width="4"/><path d="M1856 1016q14-3 15-16" fill="none" stroke="#d2d2d2" stroke-width="1.800"/>
    <path d="M1884 1000h16v16h-16z" fill="#d2d2d2"/><path d="M1885.500 1009h6v6h-6z" fill="#d2d2d2" stroke="#333" stroke-width="1.500"/><path d="M1890 1010l6-6M1891 1003h6v6" fill="none" stroke="#333" stroke-width="2.200"/>
  </svg>
</footer>

<div class="taskbar">
  <svg class="start" width="20" height="22" viewBox="0 0 20 22"><path d="M0 3l8.500-1.300V10.500H0zM9.500 1.500L20 0v10.500H9.500zM0 11.500h8.500v8.800L0 19zM9.500 11.500H20V22l-10.500-1.500z" fill="#fff"/></svg>
  <div class="search"><svg width="28" height="28" viewBox="0 0 28 28"><ellipse cx="14" cy="14" rx="11.700" ry="12" fill="none" stroke="#111" stroke-width="3"/></svg><span data-w="246">Scrivi qui per eseguire la ricerca</span><svg width="16" height="22" viewBox="0 0 16 22"><rect x="5" y="1" width="6" height="13" rx="1" fill="none" stroke="#222" stroke-width="1.400"/><path d="M2 9v5q0 3 3 3h6q3 0 3-3V9M8 17v4M5 21h6" fill="none" stroke="#222" stroke-width="1.400"/></svg></div>
  <svg class="taskview" width="25" height="20" viewBox="0 0 25 20"><path d="M5 1h14v18H5zM3 4H1v12h2M21 4h2v12h-2" fill="none" stroke="#fff" stroke-width="1.500"/></svg>
  <div class="apps">
    <span class="run"><svg viewBox="0 0 30 30"><path d="M1 4h10l2 3h15v19H1z" fill="#ffe08a"/><path d="M1 4h10l2 3H1z" fill="#f5b93d"/><path d="M7 27V16h16v11h-5v-5h-6v5z" fill="#35a6da"/></svg></span>
    <span><svg viewBox="0 0 30 30"><path d="M13 5h15v20H13z" fill="#fff"/><path d="M17 8h9M17 11h9M17 14h9M17 17h9M17 20h9M17 23h9" stroke="#2b579a" stroke-width="1.300"/><path d="M1 5l16-3v26L1 25z" fill="#2b579a"/><text x="9" y="20" text-anchor="middle" font-size="13" font-weight="700" fill="#fff">W</text></svg></span>
    <span class="run"><svg viewBox="0 0 30 30"><path d="M2 2h26v26H2z" fill="#1d0303" stroke="#d8281c" stroke-width="2"/><path d="M7 23q5-3 7-14 0-3 1-1 0 7 8 11-1 1-6-1-6 1-9 6z" fill="none" stroke="#e8e0e0" stroke-width="1.500"/></svg></span>
    <span><svg viewBox="0 0 30 30"><path d="M0 0h30v30H0z" fill="#f6eeee"/><path d="M11 4h8l6 22h-6l-1-4h-7l-1 4H5zM12 17h5l-2-9z" fill="#c8202c" fill-rule="evenodd"/></svg></span>
    <span class="run cur"><svg viewBox="0 0 30 30"><path d="M0 0h30v30H0z" fill="#e4f3f3"/><text x="15" y="21" text-anchor="middle" font-size="23" font-weight="800" fill="#109090">3</text><text x="21" y="28" text-anchor="middle" font-size="6" font-weight="700" fill="#109090">MAX</text></svg></span>
    <span class="adobe ps">Ps</span><span class="adobe ae">Ae</span><span class="adobe pr">Pr</span><span class="adobe id">Id</span><span class="adobe an">An</span><span class="adobe ai">Ai</span>
    <span><svg viewBox="0 0 30 30"><circle cx="15" cy="15" r="13.500" fill="#ffcd40"/><path d="M15 15L3.300 8.300A13.500 13.500 0 0 0 14 28.500z" fill="#0f9d58"/><path d="M15 15V9h12A13.500 13.500 0 0 0 3.300 8.300z" fill="#db4437"/><circle cx="15" cy="15" r="6.300" fill="#fff"/><circle cx="15" cy="15" r="5" fill="#4285f4"/></svg></span>
    <span class="run"><svg viewBox="0 0 30 30"><circle cx="15" cy="15" r="14" fill="#1ed760"/><path d="M7 10.500q9-3 17 1.500M8 15.500q8-2 14.500 1.500M9 20q6-2 11.500 1.500" fill="none" stroke="#000" stroke-width="2.300" stroke-linecap="round"/></svg></span>
  </div>
  <svg class="tray" width="160" height="30" viewBox="1600 1040 160 30" fill="none" stroke="#fff" stroke-width="1.400">
    <circle cx="1616" cy="1049" r="3.500"/><path d="M1612 1058q0-4 4-4t5 6"/><circle cx="1608" cy="1056" r="3"/><path d="M1603 1064q1-5 5-5t5 5"/>
    <path d="M1650 1058l7-7 7 7" stroke-width="1.800"/><path d="M1681 1051h14v9h-14z" fill="#fff"/><path d="M1696.500 1053v5M1678 1049v4M1681 1049v4M1677 1053h5v2h-5zM1679.500 1055v6"/>
    <path d="M1711 1061q2-11 13-13M1715 1061q2-7 9-9M1719 1061q1-4 5-5" /><circle cx="1723" cy="1060" r="1" fill="#fff"/>
    <path d="M1738 1052h3l4-4v14l-4-4h-3zM1748 1053q2 2 0 4"/><path d="M1751 1050q4 5 0 10M1754 1047q5 8 0 16" stroke="#777"/>
  </svg>
  <div class="clock"><span data-w="35">11:18</span><span data-w="77">01/02/2018</span></div>
  <svg class="notif" width="34" height="32" viewBox="0 0 34 32"><path d="M2 2h20v16h-9l-4 4v-4H2z" fill="#fff"/><path d="M6 6.500h12M6 10h12M6 13.500h12" stroke="#000" stroke-width="1.300"/><circle cx="22" cy="21" r="9.500" fill="#2b2b2b" stroke="#888" stroke-width="1.300"/><text x="22" y="27" text-anchor="middle" font-size="15" fill="#fff">1</text></svg>
  <i class="peek"></i>
</div>
<script src="app.js"></script>
</body>
</html>
```
FILE: styles.css
```css
* { box-sizing: border-box; }
html, body { margin: 0; width: 1920px; height: 1080px; overflow: hidden; }
body {
  background: #444;
  color: #e8e8e8;
  font: 13px/16px "DejaVu Sans Condensed", "DejaVu Sans", sans-serif;
  font-stretch: condensed;
  display: grid;
  grid-template-rows: 29px 26px 41px 48px 755px 32px 31px 68px 50px;
}
b, em, i { font-style: normal; font-weight: inherit; }
span, b, em { white-space: nowrap; }
svg { display: block; flex: none; }
svg text { font-family: "Open Sans", sans-serif; }
.defs { position: absolute; }
[data-w] { display: inline-block; }

.caret { width: 0; height: 0; border: 4.500px solid transparent; border-top: 7px solid #e0e0e0; border-bottom: 0; flex: none; }
.caret.dark { border-top-color: #000; }

/* title and menus */
.titlebar { background: #fff; color: #000; display: flex; align-items: center; font: 14.500px "Open Sans", sans-serif; }
.app-logo { width: 20px; height: 20px; margin: 0 5px 0 2px; }
.win-btns { margin: 0 0 0 auto; }
.menubar {
  background: linear-gradient(#555, #484848);
  border-top: 1px solid #3b443b;
  border-bottom: 2px solid #1c1c1c;
  font: 14px/20px "Open Sans", sans-serif;
  color: #f2f2f2;
  display: grid;
  align-items: center;
  justify-items: start;
  padding-left: 13px;
  grid-template-columns: 46px 49px 61px 65px 62px 69px 83px 89px 113px 90px 83px 93px 79px 77px 66px 393px 144px 79px 164px;
}
.menubar u { text-underline-offset: 2px; }
.signin { width: 120px; height: 22px; background: #d0d0d0; color: #222; display: flex; align-items: center; gap: 5px; padding: 0 4px; font-size: 13px; }
.signin .caret { margin-left: auto; }
.ws-label { color: #ccc; font-size: 13px; }
.ws-select { width: 164px; height: 23px; background: #646464; color: #ddd; display: flex; align-items: center; justify-content: space-between; padding: 0 9px 0 7px; font-size: 13px; }

/* main toolbar */
.toolbar {
  padding-top: 1px;
  display: grid;
  align-items: start;
  grid-template-columns:
    18px 39px 37px 10px 40px 40px 37px 5px 87px 45px 40px 39px 38px 10px
    41px 38px 41px 40px 35px 92px 37px 10px 35px 42px 11px 35px 45px 40px 36px
    10px 35px 152px 10px 41px 37px 12px 40px 35px 5px 45px 40px 37px 10px 37px
    11px 38px 41px 40px 40px 40px;
}
.ic { width: 34px; height: 38px; margin-top: 1px; }
.ic.on { width: 38px; height: 37px; background: #5b87c0; border-radius: 4px; }
.sep { width: 2px; height: 20px; background: #181818; margin: 10px 0 0; }
.vgrip { width: 4px; height: 34px; margin: 4px 0 0 2px; background: conic-gradient(#a8a8a8 25%, transparent 0) 0 0 / 2px 2px; }
.dd { width: 85px; height: 23px; margin-top: 3px; background: #646464; color: #d8d8d8; display: flex; align-items: center; justify-content: space-between; padding: 0 7px; border: 1px solid #585858; }
.dd.wide { width: 148px; padding: 0 8px 0 4px; }

/* ribbon */
.ribbon { font: 14px/20px "Open Sans", sans-serif; display: grid; grid-template-rows: 24px 24px; border-top: 1px solid #666; margin: 0 3px 0 12px; border-bottom: 1px solid #2c2c2c; height: 48px; }
.tabs { background: #535353; border-bottom: 1px solid #2f2f2f; display: grid; align-items: center; justify-items: start; color: #a4a4a4; grid-template-columns: 3px 131px 116px 118px 136px 97px 25px 10px; }
.tab.active { grid-column: 2; width: 102px; height: 22px; padding-left: 26px; color: #e0e0e0; background: linear-gradient(#7a7a7a, #5c5c5c); border: 1px solid #2c2c2c; border-bottom: 0; border-radius: 3px 3px 0 0; }
.pill { width: 18px; height: 9px; background: #e8e8e8; border-radius: 2px; display: grid; place-items: center; }
.pill .caret { border-width: 5px 4px 0; }
.caret.tiny { border-width: 4px 3px 0; }
.panels { background: linear-gradient(#4b4b4b, #3a3a3a); display: flex; gap: 1px; padding: 1px 0 0 1px; color: #e2e2e2; }
.panels span { border: 1px solid #5e5e5e; background: #444; padding: 0 5px 0 5px; height: 21px; line-height: 19px; }

/* work area */
.main { display: grid; grid-template-columns: 160px 1468px 292px; padding-top: 6px; }
.hgrip { display: block; width: 151px; height: 4px; background: conic-gradient(#b8b8b8 25%, transparent 0) 0 0 / 2px 2px; flex: none; }
.left { padding-top: 2px; display: flex; flex-direction: column; width: 160px; height: 749px; }
.left .hgrip { margin-left: 2px; }
.ex-tabs { display: flex; gap: 22px; padding: 9px 0 0 16px; height: 31px; font: 15px/21px "Open Sans", sans-serif; color: #fff; }
.more { color: #50507e; font: 18px/16px "Open Sans", sans-serif; text-align: right; padding-right: 7px; height: 16px; }
.explorer { display: flex; height: 423px; margin-top: 17px; }
.filters { width: 25px; padding-top: 5px; }
.filters > svg { width: 23px; height: 24px; margin-bottom: 3px; background: #5b87c0; }
.filters > svg.plain { background: none; margin-bottom: 3px; }
.filters .w { fill: #d4d4d4; stroke: #3a3a3a; stroke-width: 1; }
.rule { display: block; height: 2px; margin: 2px 2px 2px; background: linear-gradient(#222 50%, #888 50%); width: 19px; }
.more.side { margin-top: 21px; }
.list { width: 129px; border: 1px solid #333; display: flex; flex-direction: column; overflow: hidden; }
.list-head { height: 23px; border: 1px solid #5e5e5e; border-right: 0; padding: 2px 0 0 2px; line-height: 17px; color: #fff; overflow: hidden; flex: none; }
.list-row { height: 23px; display: flex; align-items: center; padding-left: 19px; }
.dot { width: 14px; height: 14px; border-radius: 50%; background: #d2d2d2; margin: 0 5px 0 4px; flex: none; }
.nm { background: #808080; height: 21px; line-height: 21px; padding-left: 3px; color: #fff; width: 80px; border-left: 1px solid #999; margin-top: 1px; }
.hscroll { margin-top: auto; height: 20px; background: #f2f2f2; display: flex; align-items: center; padding: 0 6px; }
.hscroll i { width: 44px; height: 18px; background: #cbcbcb; margin: 0 auto 0 7px; }
.left > .more { flex: none; }
.hgrip.low { margin-top: 24px; }
.vp-tabs { margin-top: 6px; width: 50px; height: 205px; background: linear-gradient(90deg, #272727, #353535); border-right: 1px solid #000; padding: 110px 0 0 4px; }
.play { display: grid; place-items: center; width: 24px; height: 24px; margin-left: 8px; border-radius: 4px; background: #525252; border: 1px solid #222; }
.play::after { content: ""; border: 5px solid transparent; border-left: 7px solid #e4e4e4; border-right: 0; }
.layout-btn { margin-top: 14px; height: 55px; width: 45px; border-radius: 5px 0 0 5px; background: linear-gradient(#51627c, #4a6a98 60%, #3f7fd8 85%, #3f7fd8); padding: 10px 0 0 5px; }
.layout-btn i { display: block; width: 37px; height: 34px; border: 1px solid #24344e; background: linear-gradient(#525c6b, #65748b); }

.viewport { background: #343434; border: 2px solid #776736; height: 748px; position: relative; }
.vp-label { position: absolute; left: 3px; top: 6px; display: flex; gap: 6px; color: #c4c4c4; font: 13.500px/18px "Open Sans", sans-serif; }
.wire { stroke: #fff; stroke-width: 1.400; fill: none; }
.wire .rib { stroke-width: .9; stroke: #d0d0d0; shape-rendering: crispEdges; }
.wire .clip { fill: #343434; stroke-width: 1.700; }
.redmesh { stroke: #c80000; stroke-width: 1.600; fill: none; }
.redmesh .face { fill: #f04848; }
.redmesh .side { fill: #cc0000; }
.redmesh .grain { stroke: #e83434; stroke-width: 1; stroke-dasharray: 2 1; }
.redmesh .thin { stroke-width: 1.100; }
.redmesh .rib { stroke-width: .8; shape-rendering: crispEdges; }
.redmesh .clipr { fill: #f04848; }

/* command panel */
.right { padding-top: 2px; width: 292px; height: 749px; overflow: hidden; }
.right .hgrip { margin-left: 7px; width: 283px; }
.cp-tabs { display: flex; gap: 1px; padding: 5px 0 0 4px; height: 39px; }
.cp-tabs span { width: 39px; height: 34px; background: #3a3a3a; border-radius: 5px 5px 0 0; display: grid; place-items: center; border: 1px solid #404040; border-bottom-color: #363636; padding-top: 1px; }
.cp-tabs span.on { background: #444; border-bottom-color: #444; }
.cp-tabs svg { width: 24px; height: 24px; }
.cp-name { display: flex; gap: 7px; padding: 10px 0 0 11px; height: 32px; color: #dcdcdc; }
.field { width: 246px; height: 22px; background: #646464; padding: 3px; }
.swatch { width: 21px; height: 22px; background: #a09ff0; border: 1px solid #111; border-right: 0; }
.cp-mod { margin: 13px 0 0 11px; width: 276px; height: 22px; background: #646464; color: #dcdcdc; display: flex; align-items: center; justify-content: space-between; padding: 1px 9px 0 3px; }
.stack { margin: 5px 0 0 11px; width: 277px; height: 128px; border: 2px solid #f4f4f4; display: flex; }
.rows { width: 253px; overflow: hidden; color: #fff; }
.r { height: 21px; display: grid; align-items: center; justify-items: start; grid-template-columns: 50px 1fr 22px; line-height: 20px; }
.r.top { border-bottom: 1px solid #888; padding-left: 5px; grid-template-columns: 44px 1fr 22px; padding-top: 1px; }
.r.head { grid-template-columns: 25px 1fr 22px; }
.r.head .caret { margin-left: 7px; }
.box { width: 15px; height: 15px; background: #d2d2d2; border: 1px solid #333; }
.r.sub { margin-left: 12px; border-left: 1px dotted #111; grid-template-columns: 21px 1fr 22px; }
.r.sub::before { content: ""; width: 18px; border-top: 1px dotted #111; }
.r.sub span { padding-left: 2px; }
.r.sub.sel { background: linear-gradient(90deg, transparent 21px, #5b87c0 21px); }
.vscroll { width: 20px; background: #f0f0f0; display: flex; flex-direction: column; align-items: center; padding: 8px 0; justify-content: space-between; }
.vscroll i { width: 19px; height: 59px; background: #cbcbcb; margin: 5px 0 auto; }
.stack-tools { margin-left: 7px; }
.splitter { display: flex; align-items: center; height: 8px; margin: 9px 0 0 17px; gap: 4px; }
.splitter i { height: 1px; background: #666; width: 121px; }
.splitter b { width: 13px; height: 4px; background: conic-gradient(#ccc 25%, transparent 0) 0 0 / 2px 2px; }
.rollouts { display: flex; gap: 4px; height: 440px; margin: 4px 0 0 9px; overflow: hidden; }
.roll-col { width: 267px; }
.roll { background: #525252; border: 1px solid #4b4b4b; border-radius: 4px; }
.r1 { height: 113px; margin-bottom: 5px; display: grid; grid-template-rows: 25px 25px 25px 26px; }
.rh { display: grid; grid-template-columns: 22px 1fr 15px; align-items: center; padding-left: 1px; font-weight: 700; color: #fff; font-size: 12.500px; }
.rh .caret { margin-left: 6px; border-width: 6px 4px 0; opacity: .85; }
.r1 .rh { height: 11px; }
.dots { width: 8px; height: 9px; background: conic-gradient(#8a8a8a 25%, transparent 0) 0 0 / 2px 2px; }
.kv { display: grid; grid-template-columns: 127px 94px; column-gap: 6px; align-items: center; justify-items: end; }
.kv i.white { width: 90px; height: 18px; background: #fff; border: 1px solid #000; justify-self: start; margin-top: -2px; }
.kv + .kv i.white { margin-top: 0; }
.spin { width: 76px; height: 20px; background: #646464; border: 1px solid #4c4c4c; color: #ccc; display: flex; align-items: center; justify-content: space-between; padding: 0 4px 0 3px; font-size: 12.500px; }
.spin.wide { width: 92px; justify-self: start; margin-left: -1px; }
.ud { display: grid; gap: 2px; }
.ud::before, .ud::after { content: ""; border: 3px solid transparent; }
.ud::before { border-bottom: 5px solid #d2d2d2; border-top: 0; }
.ud::after { border-top: 5px solid #d2d2d2; border-bottom: 0; }
.r2 { height: 360px; display: grid; grid-template-rows: 25px 32px 19px 28px 21px 71px 67px 60px; padding: 0; align-content: start; }
.r2 .rh { height: 22px; }
.ck { display: flex; align-items: center; gap: 4px; padding-left: 39px; }
.cb { width: 13px; height: 13px; background: #626262; border: 1px solid #474747; flex: none; display: grid; place-items: center; }
.cb.on::after { content: ""; width: 8px; height: 4px; border: solid #e4e4e4; border-width: 0 0 2.500px 2.500px; transform: rotate(-48deg); margin-bottom: 3px; }
.sw { width: 20px; height: 18px; border: 1px solid #000; }
.sw.a { background: #ffc400; margin-left: 24px; }
.sw.b { background: #e2e48c; margin-left: 6px; }
fieldset { margin: 0 0 0 30px; padding: 0; min-width: 0; width: 203px; border: 1px solid #3a3a3a; border-radius: 3px; line-height: 15px; }
legend { margin-left: 5px; padding: 0 2px 0 3px; line-height: 14px; height: 14px; color: #f0f0f0; }
.g1 { height: 66px; margin-top: 4px; }
.g2 { height: 67px; margin-top: 0; }
.g3 { height: 90px; margin-top: 3px; }
.it { display: grid; grid-template-columns: 1fr; grid-auto-flow: column; justify-content: end; align-items: center; justify-items: end; column-gap: 5px; padding-right: 7px; height: 26px; }
.g1 legend + .it { margin-top: -5px; }
.it.off { grid-template-columns: 13px 1fr; padding-left: 8px; height: 25px; }
.g2 legend + .it { margin-top: -2px; }
.it.off, .it.off .spin { color: #898989; }
.it.off .spin { background: #585858; }
.it.off .ud { opacity: .45; }
.g3 .ck { padding-left: 8px; height: 22px; }
.g3 legend + .ck { margin-top: 3px; }
.track { width: 8px; background: #3a3a3a; border-radius: 4px; padding-top: 293px; height: 440px; }
.track i { display: block; height: 106px; width: 6px; margin-left: 1px; border-radius: 3px; background: #626262; }

/* time controls */
.slider { display: flex; align-items: center; gap: 2px; padding-top: 1px; color: #d8d8d8; }
.vgrip.tall { margin: 10px 4px 0 2px; height: 20px; }
.slider span { height: 20px; border-radius: 4px; background: #616161; text-align: center; line-height: 20px; margin-bottom: 0; }
.step { width: 18px; }
.knob { width: 154px; }
.timeline { display: grid; grid-template-columns: 46px 1fr; padding-left: 27px; align-items: center; }

/* status bar */
.status { display: grid; grid-template-columns: 127px 4px 685px 541px 158px 58px 63px 157px 1fr; align-items: start; padding-top: 5px; color: #f0f0f0; font-size: 12.500px; }
.listener { margin-left: 5px; height: 60px; display: grid; grid-template-rows: 29px 30px; }
.pink { background: #dcc4c4; border: 1px solid #888; border-color: #777 #fff #fff #777; }
.mini { background: #fff; color: #777; font: 15px/20px "Liberation Mono", monospace; border: 1px solid #888; padding-left: 4px; overflow: hidden; white-space: nowrap; width: 122px; }
.prompt { grid-column: 3; display: grid; grid-template-rows: 31px 31px; align-items: center; justify-items: start; border-left: 2px solid #111; padding-left: 4px; }
.coords { display: grid; grid-template-rows: 31px 31px; align-items: center; }
.crow { display: grid; align-items: center; grid-template-columns: 35px 32px 26px 18px 86px 17px 86px 17px 89px 100px; margin-left: -1px; }
.crow b { width: 72px; height: 22px; background: #585858; border: 1px solid #4c4c4c; color: #909090; padding: 2px; overflow: hidden; }
.tag { display: flex; align-items: center; gap: 6px; padding-left: 377px; }
.tag { color: #dcdcdc; }
.playback { display: grid; grid-template-rows: 27px 28px; padding-top: 0; }
.prow { display: flex; align-items: center; padding-left: 4px; }
.frame { width: 87px; height: 21px; margin: 0 7px 0 8px; border-left: 1px solid #111; border-right: 2px solid #222; }
.bigkey { width: 53px; height: 54px; margin: 2px 0 0 4px; background: #636363; border-radius: 4px; display: grid; place-items: center; }
.autokey { display: grid; gap: 2px; margin-top: 2px; padding-left: 4px; }
.autokey span, .btn { width: 58px; height: 26px; border-radius: 4px; background: #616161; display: grid; place-items: center; color: #dcdcdc; }
.keysel { padding: 2px 0 0 4px; }
.sel2 { width: 143px; margin: 0; height: 22px; }
.krow { display: flex; align-items: center; gap: 3px; margin-top: 6px; padding-left: 2px; }
.btn { width: 110px; }
.nav { margin: 2px 0 0 4px; }

/* windows taskbar */
.taskbar { background: linear-gradient(90deg, #050606, #0b0d0c 30%, #15171a 45%, #0c0e0d 60%, #050605 80%); display: grid; align-items: center; font-family: "Open Sans", sans-serif; color: #fff; grid-template-columns: 60px 430px 63px 806px 241px 168px 100px 44px 8px; }
.start { margin-left: 20px; }
.search { height: 50px; background: #f2f2f2; color: #333; display: flex; align-items: center; padding: 0 18px 0 11px; font: 17px "Noto Sans", "Open Sans", sans-serif; font-stretch: normal; }
.search span { margin: 0 auto 0 11px; }
.taskview { margin-left: 18px; }
.apps { display: grid; grid-template-columns: repeat(13, 62px); height: 50px; }
.apps span { display: grid; place-items: center; }
.apps span > svg { width: 30px; height: 30px; }
.apps .run { background: linear-gradient(#8be0e4, #8be0e4) 50% 100% / 51px 3px no-repeat; }
.apps .cur { background: linear-gradient(#8be0e4, #8be0e4) 50% 100% / 62px 3px no-repeat, #383b3d; }
.adobe { width: 28px; height: 28px; margin: 10px 17px; border: 2px solid; font-size: 16px; font-weight: 600; line-height: 22px; letter-spacing: -.5px; font-stretch: normal; }
.ps { color: #00c0f3; background: #021c28; }
.ae { color: #c79bff; background: #1f0040; }
.pr { color: #dd7bff; background: #280035; }
.id { color: #f0409a; background: #32001c; }
.an { color: #f2452c; background: #290400; }
.ai { color: #ff8a12; background: #2a1400; }
.tray { grid-column: 5 / 7; margin-left: 241px; }
.clock { display: grid; justify-items: center; gap: 2px; font: 15px/20px "Noto Sans", "Open Sans", sans-serif; font-stretch: normal; grid-column: 7; margin-left: -20px; }
.notif { margin-left: -2px; }
.peek { width: 1px; height: 50px; background: #666; }
```
FILE: app.js
```js
// Labels declare their nominal width; tracking is adjusted so they fill it.
document.querySelectorAll('[data-w]').forEach(function (el) {
  var want = Number(el.dataset.w);
  var range = document.createRange();
  range.selectNodeContents(el);
  var natural = range.getBoundingClientRect().width;
  el.style.letterSpacing = ((want - natural) / el.textContent.length).toFixed(3) + 'px';
});

// Time ruler: one tick per frame, a label every fifth frame.
(function () {
  var out = '<rect x="73" y="931" width="1786" height="31" fill="#292929"/><rect x="73" y="931" width="1786" height="1.500" fill="#111"/>' +
    '<rect x="75.500" y="933" width="10" height="28" fill="#7d7a1c"/>';
  for (var f = 0; f <= 100; f++) {
    var x = Math.round(79.4 + f * 17.714) + 0.5;
    var major = f % 5 === 0;
    out += '<path d="M' + x + ' 931v' + (major ? 17 : 14) + '" stroke="#757575"/>';
    if (major) {
      out += '<path d="M' + x + ' 957v5" stroke="#757575"/>';
      var c = f === 0 ? '#e0dc50' : '#c2c2c2';
      out += '<text x="' + x + '" y="958.500" text-anchor="middle" font-size="13" fill="' + c + '">' + f + '</text>';
    }
  }
  document.getElementById('ruler').innerHTML = out;
})();
```
